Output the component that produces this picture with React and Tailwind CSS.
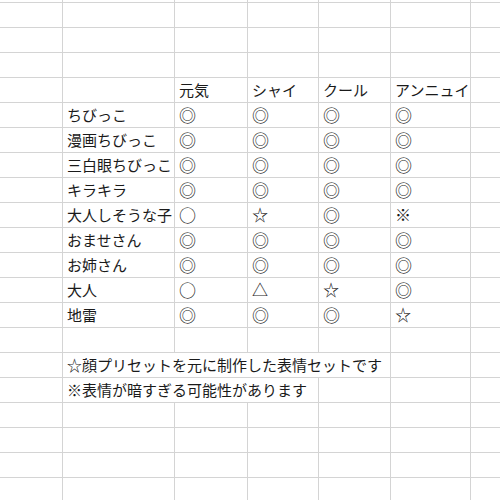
import React from "react";

const widths = ["w-[63px]", "w-[112px]", "w-[73px]", "w-[71px]", "w-[72px]", "w-[80px]", "w-[40px]"];

const data = [
  [],
  [],
  [],
  ["", "", "元気", "シャイ", "クール", "アンニュイ"],
  ["", "ちびっこ", "◎", "◎", "◎", "◎"],
  ["", "漫画ちびっこ", "◎", "◎", "◎", "◎"],
  ["", "三白眼ちびっこ", "◎", "◎", "◎", "◎"],
  ["", "キラキラ", "◎", "◎", "◎", "◎"],
  ["", "大人しそうな子", "○", "☆", "◎", "※"],
  ["", "おませさん", "◎", "◎", "◎", "◎"],
  ["", "お姉さん", "◎", "◎", "◎", "◎"],
  ["", "大人", "○", "△", "☆", "◎"],
  ["", "地雷", "◎", "◎", "◎", "☆"],
  [],
  { note: "☆顔プリセットを元に制作した表情セットです", span: 4, w: "w-[328px]" },
  { note: "※表情が暗すぎる可能性があります", span: 3, w: "w-[256px]" },
  [],
  [],
  [],
  [],
];

const symbols = { "◎": "text-[17px]", "○": "text-[17px]", "☆": "text-[16px]", "△": "text-[16px]", "※": "text-[16px]" };

function Cell({ w, children }) {
  const sym = typeof children === "string" ? symbols[children] : undefined;
  return (
    <div className={`${w} h-[25px] shrink-0 border-r border-b border-[#d4d4d4] flex items-center pl-[4px] pb-[2px] whitespace-nowrap overflow-visible`}>
      {sym ? <span className={sym}>{children}</span> : children}
    </div>
  );
}

export default function App() {
  return (
    <div
      className="w-[500px] h-[500px] overflow-hidden bg-white text-[15px] leading-none text-[#1a1a1a]"
      style={{ fontFamily: '"Noto Sans CJK JP", "Noto Sans CJK SC", sans-serif' }}
    >
      <div className="flex h-[3px]">
        {widths.map((w, i) => (
          <div key={i} className={`${w} h-[3px] shrink-0 border-r border-b border-[#d4d4d4]`} />
        ))}
      </div>
      {data.map((row, r) => {
        if (!Array.isArray(row)) {
          const rest = widths.slice(1 + row.span);
          return (
            <div key={r} className="flex">
              <Cell w={widths[0]} />
              <Cell w={row.w}>{row.note}</Cell>
              {rest.map((w, i) => (
                <Cell key={i} w={w} />
              ))}
            </div>
          );
        }
        return (
          <div key={r} className="flex">
            {widths.map((w, i) => (
              <Cell key={i} w={w}>
                {row[i] || ""}
              </Cell>
            ))}
          </div>
        );
      })}
    </div>
  );
}
